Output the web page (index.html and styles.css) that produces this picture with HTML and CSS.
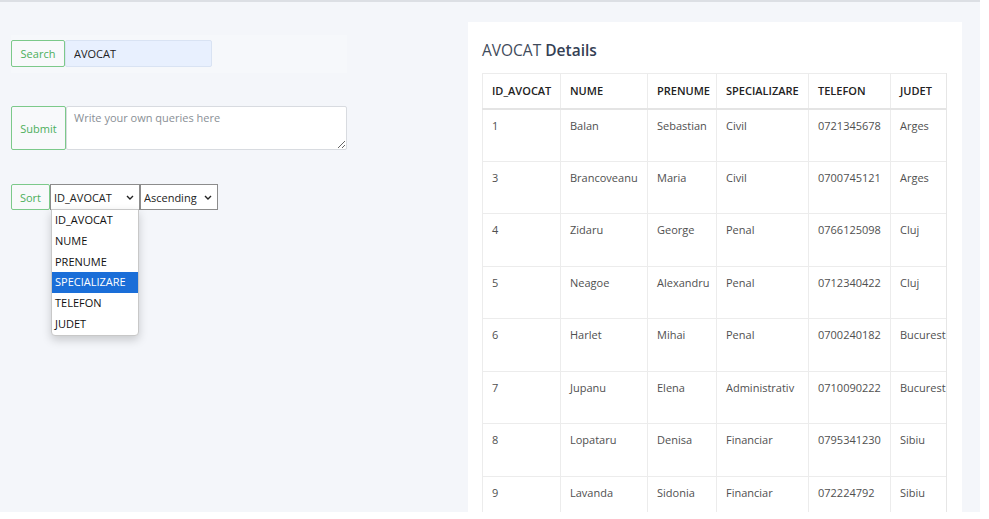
FILE: index.html
```html
<!DOCTYPE html>
<html>
<head>
<meta charset="utf-8">
<link rel="stylesheet" href="styles.css">
</head>
<body>
<div class="page">
  <div class="left">
    <form class="search-band">
      <button type="button" class="btn">Search</button>
      <input class="search-input" type="text" value="AVOCAT">
    </form>
    <form class="query-row">
      <button type="button" class="btn btn-tall">Submit</button>
      <textarea class="query" placeholder="Write your own queries here"></textarea>
    </form>
    <form class="sort-row">
      <button type="button" class="btn btn-sort">Sort</button>
      <div class="select-wrap">
        <select class="sel sel-col">
          <option>ID_AVOCAT</option>
          <option>NUME</option>
          <option>PRENUME</option>
          <option>SPECIALIZARE</option>
          <option>TELEFON</option>
          <option>JUDET</option>
        </select>
        <svg class="chev" width="8" height="5" viewBox="0 0 8 5"><path d="M1 1 L4 4 L7 1" fill="none" stroke="#222" stroke-width="1.4"/></svg>
        <ul class="dropdown">
          <li>ID_AVOCAT</li>
          <li>NUME</li>
          <li>PRENUME</li>
          <li class="active">SPECIALIZARE</li>
          <li>TELEFON</li>
          <li>JUDET</li>
        </ul>
      </div>
      <div class="select-wrap">
        <select class="sel sel-ord">
          <option>Ascending</option>
          <option>Descending</option>
        </select>
        <svg class="chev" width="8" height="5" viewBox="0 0 8 5"><path d="M1 1 L4 4 L7 1" fill="none" stroke="#222" stroke-width="1.4"/></svg>
      </div>
    </form>
  </div>
  <div class="card">
    <h2 class="title">AVOCAT <b>Details</b></h2>
    <div class="table-wrap">
      <table class="data">
        <colgroup>
          <col class="c1"><col class="c2"><col class="c3"><col class="c4"><col class="c5"><col class="c6">
        </colgroup>
        <thead>
          <tr><th>ID_AVOCAT</th><th>NUME</th><th>PRENUME</th><th>SPECIALIZARE</th><th>TELEFON</th><th>JUDET</th></tr>
        </thead>
        <tbody>
          <tr><td>1</td><td>Balan</td><td>Sebastian</td><td>Civil</td><td>0721345678</td><td>Arges</td></tr>
          <tr><td>3</td><td>Brancoveanu</td><td>Maria</td><td>Civil</td><td>0700745121</td><td>Arges</td></tr>
          <tr><td>4</td><td>Zidaru</td><td>George</td><td>Penal</td><td>0766125098</td><td>Cluj</td></tr>
          <tr><td>5</td><td>Neagoe</td><td>Alexandru</td><td>Penal</td><td>0712340422</td><td>Cluj</td></tr>
          <tr><td>6</td><td>Harlet</td><td>Mihai</td><td>Penal</td><td>0700240182</td><td>Bucuresti</td></tr>
          <tr><td>7</td><td>Jupanu</td><td>Elena</td><td>Administrativ</td><td>0710090222</td><td>Bucuresti</td></tr>
          <tr><td>8</td><td>Lopataru</td><td>Denisa</td><td>Financiar</td><td>0795341230</td><td>Sibiu</td></tr>
          <tr><td>9</td><td>Lavanda</td><td>Sidonia</td><td>Financiar</td><td>072224792</td><td>Sibiu</td></tr>
        </tbody>
      </table>
    </div>
  </div>
</div>
</body>
</html>
```

FILE: styles.css
```css
* { box-sizing: border-box; }
html, body { margin: 0; padding: 0; background: #ffffff; }
body { font-family: "Open Sans", "DejaVu Sans", sans-serif; font-size: 11px; color: #444; }

.page {
  width: 980px;
  height: 512px;
  overflow: hidden;
  background: #f4f6fa;
  border-top: 2px solid #dcdfe4;
  display: flex;
  align-items: flex-start;
}

.left {
  width: 468px;
  flex: none;
  padding: 33px 0 0 11px;
  display: flex;
  flex-direction: column;
}

.btn {
  font-family: inherit;
  font-size: 11px;
  color: #4caf5c;
  background: #f8f9fb;
  border: 1px solid #7cc98a;
  border-radius: 2px;
  padding: 0 8px;
  height: 27px;
  cursor: pointer;
}
.btn-tall { height: 44px; width: 55px; padding: 0; }
.btn-sort { height: 26px; width: 39px; padding: 0; }

.search-band {
  width: 336px;
  display: flex;
  padding: 5px 0 6px 0;
  background: #f6f8fb;
  margin: 0;
}
.search-band .btn { width: 54px; padding: 0; }
.search-input {
  width: 147px;
  height: 27px;
  border: 1px solid #d9e3f3;
  border-radius: 2px;
  background: #e8f0fe;
  font-family: inherit;
  font-size: 11px;
  color: #222;
  padding: 0 8px;
  outline: none;
}

.query-row {
  display: flex;
  margin: 33px 0 0 0;
}
.query {
  width: 281px;
  height: 44px;
  border: 1px solid #d8dbe0;
  border-radius: 2px;
  background: #fff;
  font-family: inherit;
  font-size: 11px;
  padding: 3px 7px;
  color: #333;
}
.query::placeholder { color: #8a8f96; }

.sort-row {
  display: flex;
  margin: 34px 0 0 0;
  align-items: flex-start;
}
.select-wrap { position: relative; }
.sel {
  -webkit-appearance: none;
  appearance: none;
  font-family: inherit;
  font-size: 11px;
  color: #222;
  height: 26px;
  border: 1px solid #8c8c8c;
  border-radius: 0;
  background: #fff;
  padding: 0 14px 0 3px;
  display: block;
}
.sel-col { width: 90px; }
.sel-ord { width: 78px; }
.chev {
  position: absolute;
  right: 6px;
  top: 11px;
  pointer-events: none;
}

.dropdown {
  position: absolute;
  top: 25px;
  left: 1px;
  width: 88px;
  margin: 0;
  padding: 0;
  list-style: none;
  background: #fff;
  border: 1px solid #c8c8c8;
  border-radius: 0 0 4px 4px;
  box-shadow: 0 4px 10px rgba(0,0,0,0.18);
  z-index: 5;
}
.dropdown li {
  height: 20.8px;
  line-height: 20.8px;
  padding: 0 3px;
  color: #111;
  font-size: 11px;
}
.dropdown li.active { background: #1a6ed8; color: #fff; }

.card {
  margin: 20px 0 0 0;
  width: 494px;
  height: 600px;
  background: #ffffff;
  padding: 17px 15px 0 14px;
}
.title {
  margin: 0 0 12px 0;
  font-size: 15.5px;
  font-weight: 400;
  color: #3f4b5b;
  line-height: 22px;
}
.title b { font-weight: 600; color: #344054; }

.table-wrap {
  width: 465px;
  overflow: hidden;
  border-right: 1px solid #e6e6e6;
}
.data {
  border-collapse: collapse;
  table-layout: fixed;
  width: 520px;
}
.c1 { width: 78px; }
.c2 { width: 87px; }
.c3 { width: 69px; }
.c4 { width: 92px; }
.c5 { width: 82px; }
.c6 { width: 112px; }
.data th, .data td {
  border: 1px solid #ececec;
  text-align: left;
  white-space: nowrap;
  overflow: hidden;
  padding: 0 8px 0 9px;
}
.data th {
  height: 35px;
  font-weight: 600;
  color: #222;
  font-size: 11px;
  border-bottom: 2px solid #e4e4e4;
  vertical-align: middle;
  padding-bottom: 1px;
}
.data td {
  height: 52.5px;
  vertical-align: top;
  padding-top: 7px;
  line-height: 18px;
  color: #505050;
}
```
